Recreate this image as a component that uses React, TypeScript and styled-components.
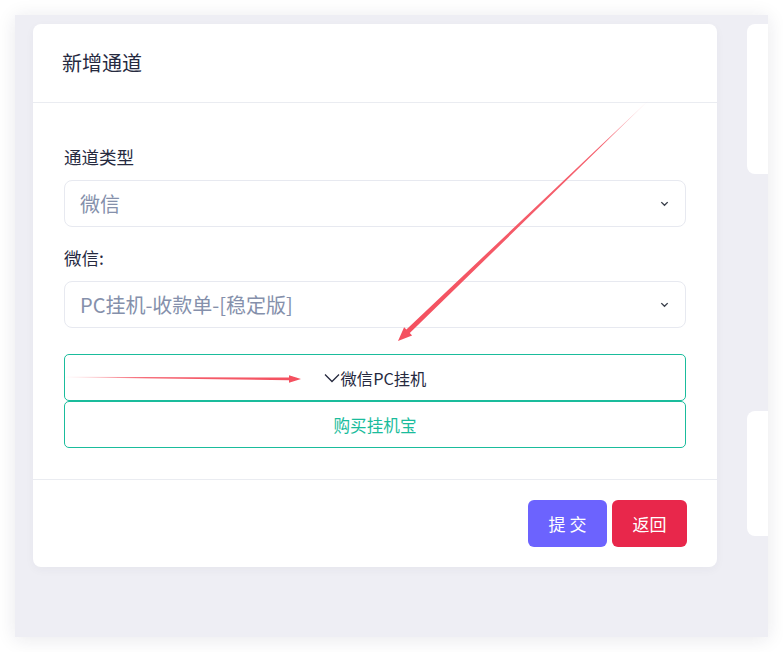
import React from "react";
import styled, { createGlobalStyle } from "styled-components";

const Global = createGlobalStyle`
  html, body { margin: 0; padding: 0; background: #ffffff; }
  body { font-family: "Noto Sans CJK SC", "Noto Sans", sans-serif; }
  * { box-sizing: border-box; }
`;

const Page = styled.div`
  position: relative;
  width: 783px;
  height: 652px;
  padding: 15px 15px 15px 15px;
`;

const Panel = styled.div`
  width: 753px;
  height: 622px;
  background: #eeeef4;
  box-shadow: 0 2px 18px rgba(30, 30, 60, 0.1);
  overflow: hidden;
  display: flex;
  gap: 30px;
  padding: 9px 0 0 18px;
`;

const Card = styled.div`
  flex: 0 0 684px;
  height: 543px;
  background: #fff;
  border-radius: 8px;
  box-shadow: 0 3px 10px rgba(40, 40, 80, 0.04);
  display: flex;
  flex-direction: column;
`;

const CardHeader = styled.div`
  height: 79px;
  padding: 0 29px 2px;
  display: flex;
  align-items: center;
  border-bottom: 1px solid #eaecf1;
  font-size: 20px;
  color: #262a3f;
`;

const CardBody = styled.div`
  padding: 42px 31px 31px;
  border-bottom: 1px solid #eaecf1;
  display: flex;
  flex-direction: column;
`;

const Label = styled.div<{ $gap?: number }>`
  font-size: 17.5px;
  line-height: 24px;
  color: #262a3f;
  margin-top: ${(p) => p.$gap ?? 0}px;
  margin-bottom: 11px;
`;

const Select = styled.div`
  height: 47px;
  border: 1px solid #e7e9f0;
  border-radius: 8px;
  padding: 0 15px;
  display: flex;
  align-items: center;
  justify-content: space-between;
  font-size: 20px;
  color: #8590ab;
`;

const Chevron = styled.svg`
  width: 11px;
  height: 11px;
`;

const OutlineButton = styled.div<{ $first?: boolean; $accent?: boolean }>`
  height: 47px;
  margin-top: ${(p) => (p.$first ? 26 : 0)}px;
  border: 1px solid #1abc9c;
  border-radius: 5px;
  display: flex;
  align-items: center;
  justify-content: center;
  font-size: ${(p) => (p.$accent ? 16.6 : 16.3)}px;
  color: ${(p) => (p.$accent ? "#1abc9c" : "#262a3f")};
`;

const DownGlyph = styled.svg`
  width: 16px;
  height: 10px;
  margin-right: 1px;
`;

const Footer = styled.div`
  display: flex;
  justify-content: flex-end;
  gap: 5px;
  padding: 20px 30px 0;
`;

const ActionButton = styled.div<{ $bg: string; $w: number }>`
  width: ${(p) => p.$w}px;
  height: 47px;
  border-radius: 6px;
  background: ${(p) => p.$bg};
  color: #fff;
  font-size: 17px;
  display: flex;
  align-items: center;
  justify-content: center;
`;

const SideColumn = styled.div`
  flex: 0 0 60px;
  display: flex;
  flex-direction: column;
`;

const SideCard = styled.div<{ $h: number; $top: number }>`
  height: ${(p) => p.$h}px;
  margin-top: ${(p) => p.$top}px;
  background: #fff;
  border-radius: 8px;
`;

const Annotations = styled.svg`
  position: absolute;
  left: 0;
  top: 0;
  width: 783px;
  height: 652px;
  pointer-events: none;
`;

const SelectChevron = () => (
  <Chevron viewBox="0 0 12 12">
    <path d="M2.5 4.5 L6 8 L9.5 4.5" fill="none" stroke="#3a3f4b" strokeWidth="1.5" />
  </Chevron>
);

export default function App() {
  return (
    <>
      <Global />
      <Page>
        <Panel>
          <Card>
            <CardHeader>新增通道</CardHeader>
            <CardBody>
              <Label>通道类型</Label>
              <Select>
                <span>微信</span>
                <SelectChevron />
              </Select>
              <Label $gap={19}>微信:</Label>
              <Select>
                <span>PC挂机-收款单-[稳定版]</span>
                <SelectChevron />
              </Select>
              <OutlineButton $first>
                <DownGlyph viewBox="0 0 16 10">
                  <path d="M1 1.5 L8 8.5 L15 1.5" fill="none" stroke="#262a3f" strokeWidth="1.3" />
                </DownGlyph>
                微信PC挂机
              </OutlineButton>
              <OutlineButton $accent>购买挂机宝</OutlineButton>
            </CardBody>
            <Footer>
              <ActionButton $bg="#6c63fe" $w={79}>提 交</ActionButton>
              <ActionButton $bg="#e8274b" $w={75}>返回</ActionButton>
            </Footer>
          </Card>
          <SideColumn>
            <SideCard $h={150} $top={0} />
            <SideCard $h={125} $top={237} />
          </SideColumn>
        </Panel>
        <Annotations viewBox="0 0 783 652">
          <defs>
            <linearGradient id="g1" gradientUnits="userSpaceOnUse" x1="652" y1="97" x2="398" y2="341">
              <stop offset="0" stopColor="#f4505f" stopOpacity="0" />
              <stop offset="0.2" stopColor="#f4505f" stopOpacity="0.9" />
              <stop offset="1" stopColor="#f4505f" stopOpacity="1" />
            </linearGradient>
            <linearGradient id="g2" gradientUnits="userSpaceOnUse" x1="62" y1="377" x2="301" y2="379">
              <stop offset="0" stopColor="#f4505f" stopOpacity="0" />
              <stop offset="0.35" stopColor="#f4505f" stopOpacity="0.9" />
              <stop offset="1" stopColor="#f4505f" stopOpacity="1" />
            </linearGradient>
          </defs>
          <polygon
            fill="url(#g1)"
            points="652,97 409.8,333.1 412.1,335.4 398,341 404.1,327.2 406.4,329.5"
          />
          <polygon
            fill="url(#g2)"
            points="62,376.8 289,377.5 289,375.2 301,379 289,382.8 289,380.3 62,377.2"
          />
        </Annotations>
      </Page>
    </>
  );
}
